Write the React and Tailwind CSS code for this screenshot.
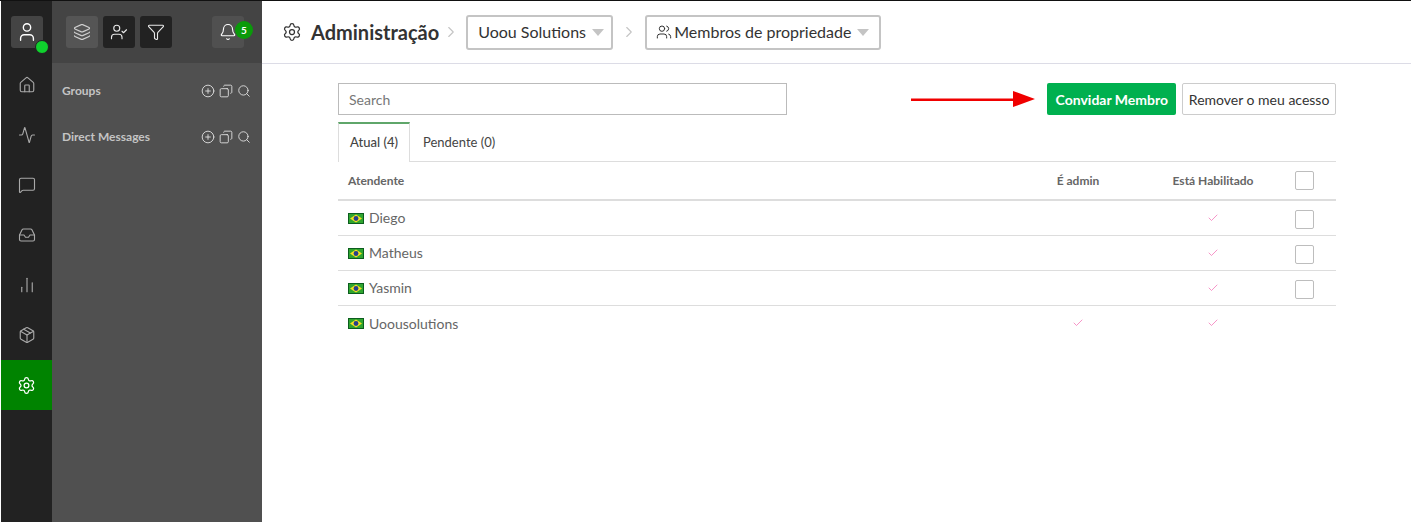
import React from 'react';
import { User, Layers, UserCheck, Filter, Bell, Home, Activity, MessageSquare, Inbox, BarChart2, Package, Settings, CirclePlus, Copy, Search, ChevronRight, Users, Check } from 'lucide-react';

const railItems = [Home, Activity, MessageSquare, Inbox, BarChart2, Package];

const members = [
  { name: 'Diego', enabled: true, selectable: true },
  { name: 'Matheus', enabled: true, selectable: true },
  { name: 'Yasmin', enabled: true, selectable: true },
  { name: 'Uoousolutions', admin: true, enabled: true },
];

const Flag = () => (
  <svg width="16" height="11" viewBox="0 0 16 11" className="shrink-0">
    <rect width="16" height="11" fill="#0b5d1e" />
    <rect x="1" y="1" width="14" height="9" fill="#2fa52f" />
    <polygon points="8,1.5 14,5.5 8,9.5 2,5.5" fill="#f5e020" />
    <circle cx="8" cy="5.5" r="2.4" fill="#27408b" />
  </svg>
);

const SectionRow = ({ label }) => (
  <div className="flex items-center justify-between h-[46px] pl-[10px] pr-[11px]">
    <span className="text-[12px] font-bold text-[#c4c4c4]">{label}</span>
    <div className="flex items-center gap-[4px] text-[#e4e4e4]">
      <CirclePlus size={14} strokeWidth={1.5} />
      <Copy size={14} strokeWidth={1.5} className="-scale-x-100" />
      <Search size={14} strokeWidth={1.5} />
    </div>
  </div>
);

const Dropdown = ({ children, className }) => (
  <div className={`h-[35px] flex items-center border-2 border-[#c4c4c4] rounded-[3px] text-[16px] text-[#333] ${className}`}>
    {children}
    <span className="ml-[6px] w-0 h-0 border-x-[6px] border-x-transparent border-t-[7px] border-t-[#c4c4c4]" />
  </div>
);

const Checkbox = () => (
  <div className="w-[19px] h-[19px] border border-[#bdbdbd] rounded-[2px] bg-white" />
);

const Tick = () => <Check size={12} strokeWidth={1.5} className="text-[#f472b6]" />;

export default function App() {
  return (
    <div className="w-[1411px] h-[522px] flex bg-white border-t border-t-[#111] overflow-hidden font-['Lato','Open_Sans',sans-serif]">
      {/* Rail */}
      <div className="w-[51px] shrink-0 ml-px bg-[#222] flex flex-col items-center">
        <div className="relative mt-[15px] mb-[7px] w-[32px] h-[32px] rounded-[3px] bg-[#444] flex items-center justify-center text-white">
          <User size={22} strokeWidth={1.5} />
          <span className="absolute right-[-6px] bottom-[-6px] w-[14px] h-[14px] rounded-full bg-[#0fd12d] border border-[#222]" />
        </div>
        <div className="h-[5px]" />
        {railItems.map((Icon, i) => (
          <div key={i} className="w-full h-[50px] flex items-center justify-center text-[#a9a9a9]">
            <Icon size={18} strokeWidth={1.5} />
          </div>
        ))}
        <div className="w-full h-[50px] flex items-center justify-center bg-[#008300] text-white">
          <Settings size={19} strokeWidth={1.6} />
        </div>
      </div>

      {/* Side panel */}
      <div className="w-[210px] shrink-0 bg-[#505050] flex flex-col">
        <div className="h-[62px] bg-[#444] flex items-center pl-[14px] pb-[-1px]">
          <div className="w-[32px] h-[32px] rounded-[3px] bg-[#555] flex items-center justify-center text-[#cfcfcf]">
            <Layers size={18} strokeWidth={1.5} />
          </div>
          <div className="ml-[5px] w-[32px] h-[32px] rounded-[3px] bg-[#222] flex items-center justify-center text-[#e8e8e8]">
            <UserCheck size={18} strokeWidth={1.5} />
          </div>
          <div className="ml-[5px] w-[32px] h-[32px] rounded-[3px] bg-[#222] flex items-center justify-center text-[#e8e8e8]">
            <Filter size={18} strokeWidth={1.5} />
          </div>
          <div className="relative ml-[40px] w-[32px] h-[32px] rounded-[3px] bg-[#505050] flex items-center justify-center text-white">
            <Bell size={18} strokeWidth={1.5} />
            <span className="absolute right-[-9px] top-[5px] w-[18px] h-[18px] rounded-full bg-[#0a9a0a] flex items-center justify-center text-[10px] font-bold text-white">5</span>
          </div>
        </div>
        <div className="pt-[5px]">
          <SectionRow label="Groups" />
          <SectionRow label="Direct Messages" />
        </div>
      </div>

      {/* Main */}
      <div className="flex-1 min-w-0 flex flex-col">
        <div className="h-[63px] shrink-0 border-b border-b-[#dcdce6] flex items-center pl-[20px]">
          <Settings size={20} strokeWidth={1.5} className="text-[#333]" />
          <span className="ml-[9px] text-[20px] font-bold text-[#333]">Administração</span>
          <ChevronRight size={18} strokeWidth={1.5} className="ml-[3px] text-[#c4c4c4]" />
          <Dropdown className="ml-[6px] w-[147px] pl-[10px]">Uoou Solutions</Dropdown>
          <ChevronRight size={18} strokeWidth={1.5} className="ml-[7px] text-[#c4c4c4]" />
          <Dropdown className="ml-[7px] w-[236px] pl-[9px]">
            <Users size={16} strokeWidth={1.5} className="mr-[2px]" />
            Membros de propriedade
          </Dropdown>
        </div>

        <div className="pl-[76px] pr-[75px]">
          <div className="mt-[19px] flex items-center">
            <input
              readOnly
              placeholder="Search"
              className="w-[450px] h-[32px] px-[10px] border border-[#bbb] text-[14px] text-[#555] placeholder:text-[#777] outline-none"
            />
            <svg width="124" height="20" viewBox="0 0 124 20" className="ml-[124px] shrink-0">
              <polygon points="0,9.5 102,9.5 102,2 124,10 102,18 102,12 0,12" fill="#f00000" />
            </svg>
            <button className="ml-[12px] w-[129px] h-[32px] rounded-[2px] bg-[#00b04f] text-[14px] font-bold text-white">Convidar Membro</button>
            <button className="ml-[6px] w-[154px] h-[32px] rounded-[2px] border border-[#ccc] bg-white text-[14px] text-[#333]">Remover o meu acesso</button>
          </div>

          <div className="mt-[7px] h-[40px] flex border-b border-b-[#ddd]">
            <div className="w-[72px] h-[40px] border-t-2 border-t-[#5fa66a] border-x border-x-[#ddd] bg-white flex items-center justify-center text-[13px] font-medium text-[#444]">Atual (4)</div>
            <div className="pl-[13px] h-[40px] pt-[2px] flex items-center text-[13px] text-[#444]">Pendente (0)</div>
          </div>

          <div className="h-[39px] flex items-center border-b-2 border-b-[#ddd] text-[12px] font-bold text-[#666]">
            <div className="flex-1 pl-[10px]">Atendente</div>
            <div className="w-[80px] text-center mr-[45px]">É admin</div>
            <div className="w-[100px] text-center">Está Habilitado</div>
            <div className="w-[73px] pl-[32px]"><Checkbox /></div>
          </div>

          {members.map((m, i) => (
            <div key={m.name} className={`h-[35px] flex items-center ${i < members.length - 1 ? 'border-b border-b-[#ddd]' : ''}`}>
              <div className="flex-1 pl-[10px] flex items-center gap-[5px] text-[14px] text-[#666]">
                <Flag />
                <span className="-mt-[1px]">{m.name}</span>
              </div>
              <div className="w-[80px] mr-[45px] flex justify-center -mt-[1px]">{m.admin && <Tick />}</div>
              <div className="w-[100px] flex justify-center -mt-[1px]">{m.enabled && <Tick />}</div>
              <div className="w-[73px] pl-[32px] mt-[3px]">{m.selectable && <Checkbox />}</div>
            </div>
          ))}
        </div>
      </div>
    </div>
  );
}
